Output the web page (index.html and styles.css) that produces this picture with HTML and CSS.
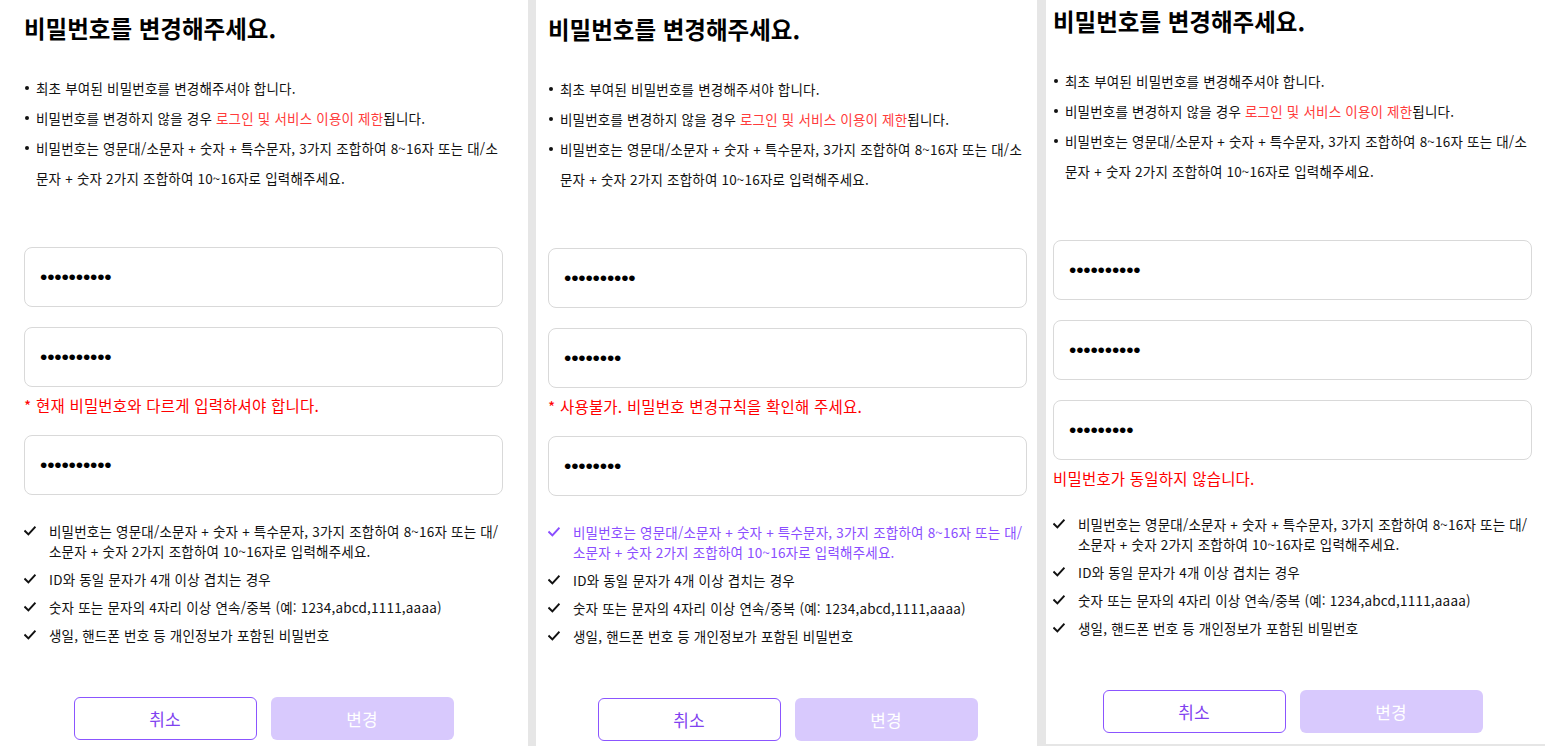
FILE: index.html
```html
<!DOCTYPE html>
<html lang="ko">
<head>
<meta charset="utf-8">
<title>비밀번호 변경</title>
<link rel="stylesheet" href="styles.css">
</head>
<body>
<main class="board">

  <section class="panel panel--a">
    <h1 class="title">비밀번호를 변경해주세요.</h1>
    <ul class="notice">
      <li><span>최초 부여된 비밀번호를 변경해주셔야 합니다.</span></li>
      <li><span>비밀번호를 변경하지 않을 경우 <em class="warn">로그인 및 서비스 이용이 제한</em>됩니다.</span></li>
      <li><span>비밀번호는 영문대/소문자 + 숫자 + 특수문자, 3가지 조합하여 8~16자 또는 대/소문자 + 숫자 2가지 조합하여 10~16자로 입력해주세요.</span></li>
    </ul>
    <div class="fields">
      <input class="field" type="password" value="aaaaaaaaaa" aria-label="현재 비밀번호">
      <input class="field" type="password" value="aaaaaaaaaa" aria-label="새 비밀번호">
      <p class="error">* 현재 비밀번호와 다르게 입력하셔야 합니다.</p>
      <input class="field" type="password" value="aaaaaaaaaa" aria-label="새 비밀번호 확인">
    </div>
    <ul class="rules">
      <li class="rule"><svg class="check" viewBox="0 0 12 12"><path d="M1.2 6.2 L4.4 9.4 L10.8 2.4"/></svg><span>비밀번호는 영문대/소문자 + 숫자 + 특수문자, 3가지 조합하여 8~16자 또는 대/소문자 + 숫자 2가지 조합하여 10~16자로 입력해주세요.</span></li>
      <li class="rule"><svg class="check" viewBox="0 0 12 12"><path d="M1.2 6.2 L4.4 9.4 L10.8 2.4"/></svg><span>ID와 동일 문자가 4개 이상 겹치는 경우</span></li>
      <li class="rule"><svg class="check" viewBox="0 0 12 12"><path d="M1.2 6.2 L4.4 9.4 L10.8 2.4"/></svg><span>숫자 또는 문자의 4자리 이상 연속/중복 (예: 1234,abcd,1111,aaaa)</span></li>
      <li class="rule"><svg class="check" viewBox="0 0 12 12"><path d="M1.2 6.2 L4.4 9.4 L10.8 2.4"/></svg><span>생일, 핸드폰 번호 등 개인정보가 포함된 비밀번호</span></li>
    </ul>
    <div class="actions">
      <button class="btn btn--ghost" type="button">취소</button>
      <button class="btn btn--fill" type="button" disabled>변경</button>
    </div>
  </section>

  <section class="panel panel--b">
    <h1 class="title">비밀번호를 변경해주세요.</h1>
    <ul class="notice">
      <li><span>최초 부여된 비밀번호를 변경해주셔야 합니다.</span></li>
      <li><span>비밀번호를 변경하지 않을 경우 <em class="warn">로그인 및 서비스 이용이 제한</em>됩니다.</span></li>
      <li><span>비밀번호는 영문대/소문자 + 숫자 + 특수문자, 3가지 조합하여 8~16자 또는 대/소문자 + 숫자 2가지 조합하여 10~16자로 입력해주세요.</span></li>
    </ul>
    <div class="fields">
      <input class="field" type="password" value="aaaaaaaaaa" aria-label="현재 비밀번호">
      <input class="field" type="password" value="aaaaaaaa" aria-label="새 비밀번호">
      <p class="error">* 사용불가. 비밀번호 변경규칙을 확인해 주세요.</p>
      <input class="field" type="password" value="aaaaaaaa" aria-label="새 비밀번호 확인">
    </div>
    <ul class="rules">
      <li class="rule rule--ok"><svg class="check" viewBox="0 0 12 12"><path d="M1.2 6.2 L4.4 9.4 L10.8 2.4"/></svg><span>비밀번호는 영문대/소문자 + 숫자 + 특수문자, 3가지 조합하여 8~16자 또는 대/소문자 + 숫자 2가지 조합하여 10~16자로 입력해주세요.</span></li>
      <li class="rule"><svg class="check" viewBox="0 0 12 12"><path d="M1.2 6.2 L4.4 9.4 L10.8 2.4"/></svg><span>ID와 동일 문자가 4개 이상 겹치는 경우</span></li>
      <li class="rule"><svg class="check" viewBox="0 0 12 12"><path d="M1.2 6.2 L4.4 9.4 L10.8 2.4"/></svg><span>숫자 또는 문자의 4자리 이상 연속/중복 (예: 1234,abcd,1111,aaaa)</span></li>
      <li class="rule"><svg class="check" viewBox="0 0 12 12"><path d="M1.2 6.2 L4.4 9.4 L10.8 2.4"/></svg><span>생일, 핸드폰 번호 등 개인정보가 포함된 비밀번호</span></li>
    </ul>
    <div class="actions">
      <button class="btn btn--ghost" type="button">취소</button>
      <button class="btn btn--fill" type="button" disabled>변경</button>
    </div>
  </section>

  <section class="panel panel--c">
    <h1 class="title">비밀번호를 변경해주세요.</h1>
    <ul class="notice">
      <li><span>최초 부여된 비밀번호를 변경해주셔야 합니다.</span></li>
      <li><span>비밀번호를 변경하지 않을 경우 <em class="warn">로그인 및 서비스 이용이 제한</em>됩니다.</span></li>
      <li><span>비밀번호는 영문대/소문자 + 숫자 + 특수문자, 3가지 조합하여 8~16자 또는 대/소문자 + 숫자 2가지 조합하여 10~16자로 입력해주세요.</span></li>
    </ul>
    <div class="fields">
      <input class="field" type="password" value="aaaaaaaaaa" aria-label="현재 비밀번호">
      <input class="field" type="password" value="aaaaaaaaaa" aria-label="새 비밀번호">
      <input class="field" type="password" value="aaaaaaaaa" aria-label="새 비밀번호 확인">
      <p class="error">비밀번호가 동일하지 않습니다.</p>
    </div>
    <ul class="rules">
      <li class="rule"><svg class="check" viewBox="0 0 12 12"><path d="M1.2 6.2 L4.4 9.4 L10.8 2.4"/></svg><span>비밀번호는 영문대/소문자 + 숫자 + 특수문자, 3가지 조합하여 8~16자 또는 대/소문자 + 숫자 2가지 조합하여 10~16자로 입력해주세요.</span></li>
      <li class="rule"><svg class="check" viewBox="0 0 12 12"><path d="M1.2 6.2 L4.4 9.4 L10.8 2.4"/></svg><span>ID와 동일 문자가 4개 이상 겹치는 경우</span></li>
      <li class="rule"><svg class="check" viewBox="0 0 12 12"><path d="M1.2 6.2 L4.4 9.4 L10.8 2.4"/></svg><span>숫자 또는 문자의 4자리 이상 연속/중복 (예: 1234,abcd,1111,aaaa)</span></li>
      <li class="rule"><svg class="check" viewBox="0 0 12 12"><path d="M1.2 6.2 L4.4 9.4 L10.8 2.4"/></svg><span>생일, 핸드폰 번호 등 개인정보가 포함된 비밀번호</span></li>
    </ul>
    <div class="actions">
      <button class="btn btn--ghost" type="button">취소</button>
      <button class="btn btn--fill" type="button" disabled>변경</button>
    </div>
  </section>

</main>
</body>
</html>
```

FILE: styles.css
```css
html, body {
  margin: 0;
  padding: 0;
}

body {
  font-family: "Noto Sans CJK KR", "Noto Sans", sans-serif;
  color: #111;
  background: #e6e6e6;
}

.board {
  display: flex;
  align-items: flex-start;
  height: 746px;
  overflow: hidden;
  background: #e6e6e6;
}

.panel {
  flex: none;
  box-sizing: border-box;
  height: 746px;
  background: #fff;
}

.panel--a {
  width: 528px;
  padding: 13px 25px 0 24px;
}

.panel--b {
  width: 501px;
  margin-left: 8px;
  padding: 14px 10px 0 12px;
}

.panel--c {
  width: 499px;
  height: 744px;
  margin-left: 9px;
  padding: 6px 13px 0 7px;
}

.title {
  margin: 0;
  font-size: 23.5px;
  line-height: 30px;
  font-weight: 700;
  color: #000;
}

.notice {
  list-style: none;
  margin: 30px 0 0;
  padding: 0;
  font-size: 13.5px;
  letter-spacing: 0.2px;
  line-height: 30px;
  color: #111;
}

.notice li {
  display: flex;
  align-items: flex-start;
}

.notice li::before {
  content: "";
  flex: none;
  width: 4px;
  height: 4px;
  margin: 13px 7px 0 1px;
  border-radius: 50%;
  background: #111;
}

.warn {
  font-style: normal;
  color: #ff3b3b;
}

.fields {
  margin-top: 54px;
}

.field {
  display: block;
  width: 100%;
  height: 60px;
  box-sizing: border-box;
  margin: 0;
  padding: 0 15px;
  border: 1px solid #d9d9d9;
  border-radius: 8px;
  background: #fff;
  font-family: "Liberation Sans", sans-serif;
  font-size: 21px;
  letter-spacing: -0.2px;
  color: #000;
  outline: none;
}

.field + .field,
.error + .field {
  margin-top: 20px;
}

.error {
  margin: 8px 0 0;
  font-size: 15.5px;
  letter-spacing: 0.2px;
  line-height: 20px;
  color: #ff0000;
}

.rules {
  list-style: none;
  margin: 26px 0 0;
  padding: 0;
  display: flex;
  flex-direction: column;
  gap: 8px;
  font-size: 13.5px;
  letter-spacing: 0.2px;
  line-height: 20px;
  color: #111;
}

.rule {
  display: flex;
  align-items: flex-start;
}

.check {
  flex: none;
  width: 12px;
  height: 12px;
  margin: 4px 13px 0 0;
  fill: none;
  stroke: currentColor;
  stroke-width: 2;
  stroke-linecap: square;
  stroke-linejoin: miter;
}

.rule--ok {
  color: #8a4dff;
}

.actions {
  display: flex;
  justify-content: center;
  gap: 14px;
  margin-top: 52px;
}

.btn {
  flex: none;
  width: 183px;
  height: 43px;
  box-sizing: border-box;
  margin: 0;
  padding: 0;
  border-radius: 6px;
  font-family: inherit;
  font-size: 17px;
  cursor: pointer;
}

.btn--ghost {
  border: 1px solid #8b55ff;
  background: #fff;
  color: #7f42f0;
}

.btn--fill {
  border: 0;
  background: #d8c9fd;
  color: #fff;
}
```
